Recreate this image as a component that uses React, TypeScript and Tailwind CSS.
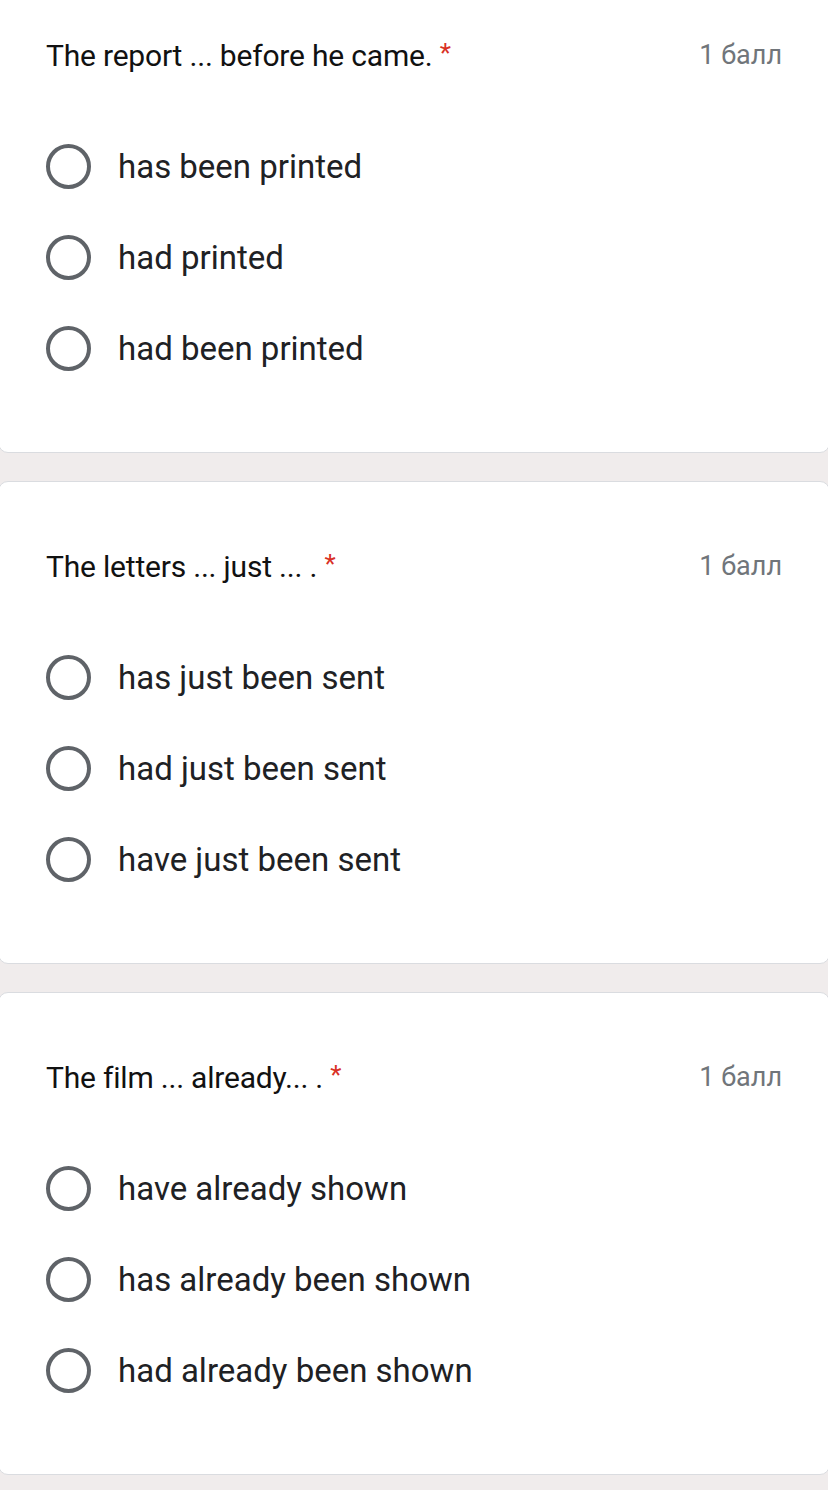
import React from 'react';

type Question = {
    title: string;
    options: string[];
};

const questions: Question[] = [
    {
        title: 'The report ... before he came.',
        options: ['has been printed', 'had printed', 'had been printed'],
    },
    {
        title: 'The letters ... just ... .',
        options: ['has just been sent', 'had just been sent', 'have just been sent'],
    },
    {
        title: 'The film ... already... .',
        options: ['have already shown', 'has already been shown', 'had already been shown'],
    },
];

const Radio: React.FC = () => (
    <span className="block w-[45px] h-[45px] rounded-full border-[4px] border-[#5f6368] shrink-0" />
);

const QuestionCard: React.FC<{ q: Question }> = ({ q }) => (
    <div className="bg-white border border-[#dadce0] rounded-[10px] mx-[-2px] pl-[47px] pr-[47px] pt-[64px] pb-[58px]">
        <div className="flex items-center justify-between h-[40px]">
            <h2 className="text-[30px] text-[#111] tracking-[-0.2px] font-['Roboto',sans-serif]">
                {q.title} <span className="relative top-[-4px] text-[26px] text-[#d93025]">*</span>
            </h2>
            <span className="text-[27px] text-[#70757a] font-['Roboto',sans-serif]">1 балл</span>
        </div>
        <div className="mt-[46px] flex flex-col">
            {q.options.map((opt) => (
                <label key={opt} className="flex items-center gap-[27px] h-[91px]">
                    <Radio />
                    <span className="text-[33px] text-[#202124] font-['Roboto',sans-serif]">{opt}</span>
                </label>
            ))}
        </div>
    </div>
);

const App: React.FC = () => {
    return (
        <div className="min-h-screen bg-[#f0ecec] overflow-hidden">
            <div className="flex flex-col gap-[28px] mt-[-30px]">
                {questions.map((q) => (
                    <QuestionCard key={q.title} q={q} />
                ))}
            </div>
        </div>
    );
};

export default App;
